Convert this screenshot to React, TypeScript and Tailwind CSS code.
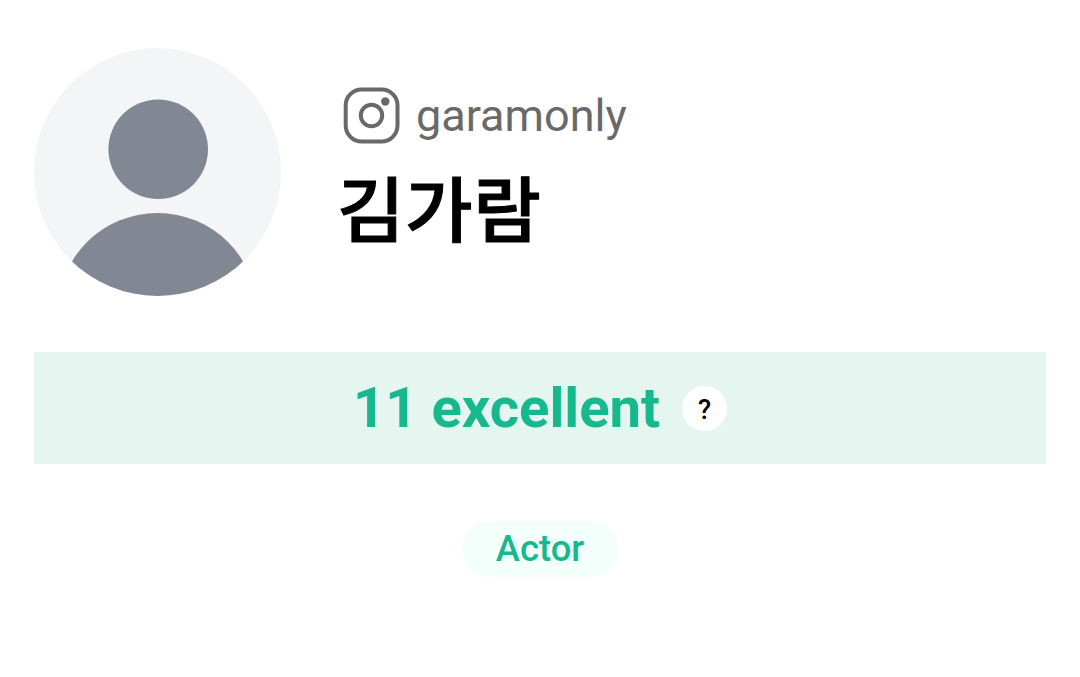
const profile = {
  handle: 'garamonly',
  name: '김가람',
  score: 11,
  grade: 'excellent',
  job: 'Actor'
};

const Avatar = () => (
  <svg width="248" height="248" viewBox="0 0 248 248" className="shrink-0">
    <defs>
      <clipPath id="avatar-clip">
        <ellipse cx="123.5" cy="124" rx="123.5" ry="124" />
      </clipPath>
    </defs>
    <g clipPath="url(#avatar-clip)">
      <rect width="248" height="248" fill="#f3f5f7" />
      <circle cx="124.2" cy="101.2" r="49.8" fill="#828893" />
      <circle cx="123.5" cy="265" r="100" fill="#828893" />
    </g>
  </svg>
);

const InstagramIcon = () => (
  <svg width="57" height="57" viewBox="0 0 57 57" fill="none" stroke="#696969" strokeWidth="4">
    <rect x="2.7" y="2.5" width="51.8" height="52" rx="16" />
    <circle cx="28.5" cy="28.5" r="10.7" />
    <circle cx="42.3" cy="14.5" r="4.2" fill="#696969" stroke="none" />
  </svg>
);

const App = () => {
  return (
    <div className="h-[677px] w-[1080px] overflow-hidden bg-white px-[34px] pt-12 font-[Roboto,'Noto_Sans_CJK_KR',sans-serif]">
      <div className="flex h-[248px]">
        <Avatar />
        <div className="pl-[61px] pt-[39px]">
          <div className="flex h-[57px] items-center gap-4 text-[#696969]">
            <InstagramIcon />
            <span className="text-[45px] leading-[57px]">{profile.handle}</span>
          </div>
          <h1 className="mt-[22px] -ml-[6px] origin-left scale-x-[1.035] text-[71px] font-medium leading-[92px] tracking-[0.5px] text-black [-webkit-text-stroke:1px_black]">
            {profile.name}
          </h1>
        </div>
      </div>

      <div className="mt-14 flex h-28 items-center justify-center gap-[22px] bg-[#e5f6f0]">
        <span className="text-[56.2px] font-bold leading-none text-[#18b88f]">
          {profile.score} {profile.grade}
        </span>
        <button type="button" className="flex size-[45px] items-center justify-center rounded-full bg-white pt-[5px] text-[27px] font-medium leading-none text-black">
          ?
        </button>
      </div>

      <div className="mt-[57px] flex justify-center">
        <span className="flex h-14 w-[156px] items-center justify-center rounded-full bg-[#f2fffb] text-[36.4px] font-medium text-[#18b88f]">
          {profile.job}
        </span>
      </div>
    </div>
  );
};

export default App;
